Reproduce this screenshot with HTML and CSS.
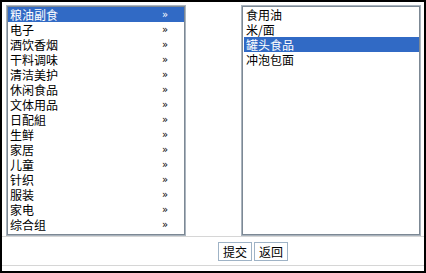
FILE: index.html
```html
<!DOCTYPE html>
<html>
<head>
<meta charset="utf-8" />
<title>分类选择</title>
<link rel="stylesheet" href="styles.css">
</head>
<body>
	<div class="frame">
		<div class="pick-row">
			<ul class="listbox listbox-main">
				<li class="selected"><span class="label">粮油副食</span><span class="more">»</span></li>
				<li><span class="label">电子</span><span class="more">»</span></li>
				<li><span class="label">酒饮香烟</span><span class="more">»</span></li>
				<li><span class="label">干料调味</span><span class="more">»</span></li>
				<li><span class="label">清洁美护</span><span class="more">»</span></li>
				<li><span class="label">休闲食品</span><span class="more">»</span></li>
				<li><span class="label">文体用品</span><span class="more">»</span></li>
				<li><span class="label">日配組</span><span class="more">»</span></li>
				<li><span class="label">生鲜</span><span class="more">»</span></li>
				<li><span class="label">家居</span><span class="more">»</span></li>
				<li><span class="label">儿童</span><span class="more">»</span></li>
				<li><span class="label">针织</span><span class="more">»</span></li>
				<li><span class="label">服装</span><span class="more">»</span></li>
				<li><span class="label">家电</span><span class="more">»</span></li>
				<li><span class="label">综合组</span><span class="more">»</span></li>
			</ul>
			<ul class="listbox listbox-sub">
				<li><span class="label">食用油</span></li>
				<li><span class="label">米/面</span></li>
				<li class="selected"><span class="label">罐头食品</span></li>
				<li><span class="label">冲泡包面</span></li>
			</ul>
		</div>
		<div class="button-row">
			<button type="button" class="btn">提交</button>
			<button type="button" class="btn">返回</button>
		</div>
	</div>
</body>
</html>
```

FILE: styles.css
```css
html, body {
	margin: 0;
	padding: 0;
	background: #fff;
}

body {
	font-family: "Noto Sans CJK SC", "DejaVu Sans", sans-serif;
	font-size: 12px;
	color: #000;
}

.frame {
	box-sizing: border-box;
	width: 426px;
	height: 273px;
	border: 2px solid #000;
	display: flex;
	flex-direction: column;
}

/* top row: the two list boxes */
.pick-row {
	display: flex;
	justify-content: space-between;
	padding: 3px 3px 0 4px;
	height: 231px;
	border-bottom: 1px solid #d6d6d6;
}

.listbox {
	list-style: none;
	margin: 0;
	padding: 1px;
	box-sizing: border-box;
	height: 231px;
	border: 1px solid #aab4be;
	box-shadow: inset 0 0 0 1px #7c8894;
	background: #fff;
}
.listbox-main {
	width: 180px;
}
.listbox-sub {
	width: 180px;
	padding-left: 2px;
}

.listbox li {
	height: 15px;
	line-height: 15px;
	padding-left: 2px;
	white-space: nowrap;
	overflow: hidden;
}
.listbox li.selected {
	background: #316ac5;
	color: #fff;
}

/* keep each label inside its 15px row */
.label,
.more {
	display: inline-block;
	height: 15px;
	line-height: 15px;
	overflow: hidden;
	vertical-align: top;
}

.listbox-main li {
	display: flex;
	justify-content: space-between;
	padding-right: 16px;
}
.more {
	font-size: 10px;
	font-family: "DejaVu Sans", sans-serif;
}

/* bottom row: buttons */
.button-row {
	display: flex;
	gap: 2px;
	align-items: center;
	height: 28px;
	padding-left: 216px;
	border-bottom: 1px solid #d6d6d6;
}

.btn {
	font-family: inherit;
	font-size: 12px;
	height: 19px;
	line-height: 15px;
	padding: 0 4px;
	margin: 0;
	background: #fff;
	color: #000;
	border: 1px solid #9fb3c6;
	border-radius: 0;
}
```
